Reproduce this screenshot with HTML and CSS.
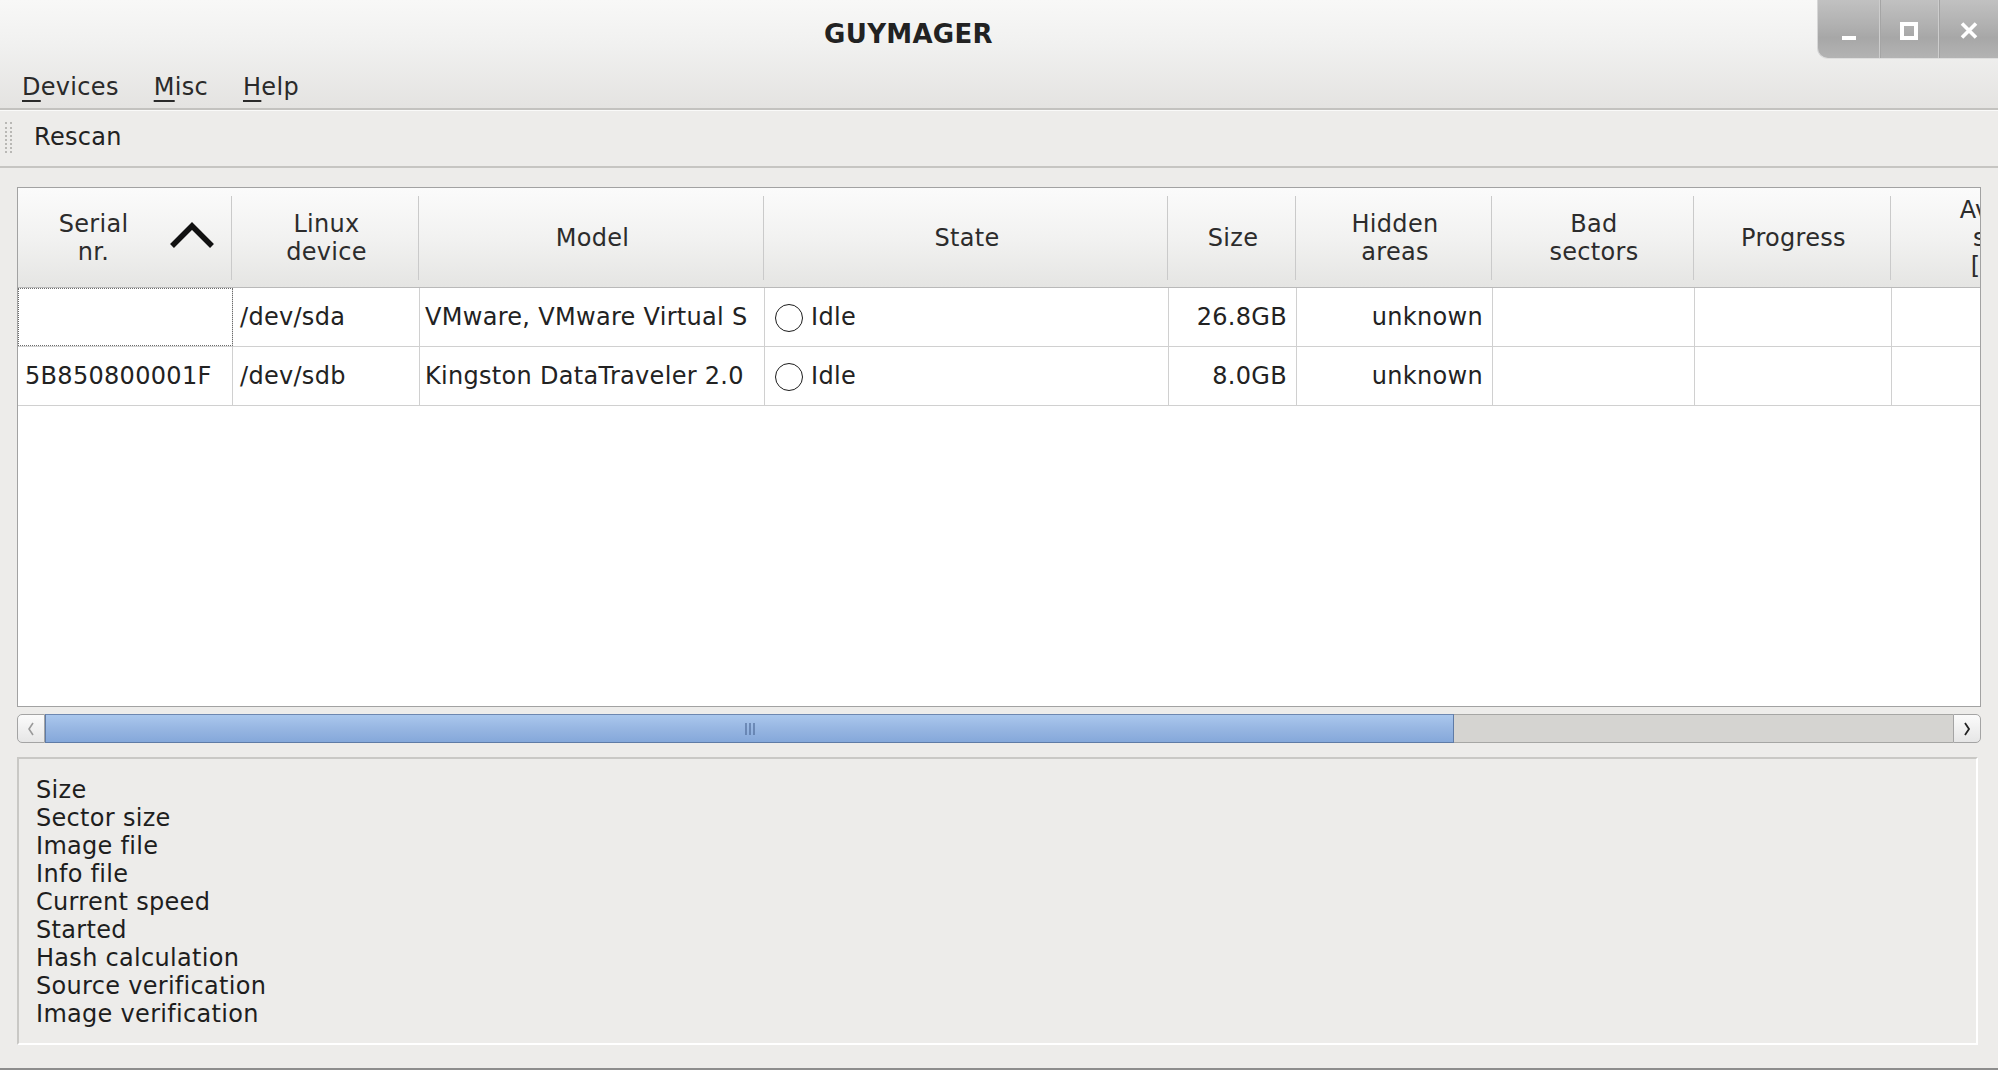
FILE: index.html
```html
<!DOCTYPE html>
<html>
<head>
<meta charset="utf-8">
<title>GUYMAGER</title>
<link rel="stylesheet" href="styles.css">
</head>
<body>
<div class="window">
  <div class="top">
    <div class="titlebar">
      <div class="title">GUYMAGER</div>
      <div class="wm">
        <div class="wm-btn wm-min"><svg width="14" height="4" viewBox="0 0 14 4"><rect x="0" y="0" width="14" height="4" fill="#fff"/></svg></div>
        <div class="wm-btn wm-max"><svg width="18" height="18" viewBox="0 0 18 18"><rect x="2" y="2" width="14" height="14" fill="none" stroke="#fff" stroke-width="4"/></svg></div>
        <div class="wm-btn wm-close"><svg width="18" height="17" viewBox="0 0 18 17"><path d="M2 1.5 L16 15.5 M16 1.5 L2 15.5" stroke="#fff" stroke-width="3.6" fill="none"/></svg></div>
      </div>
    </div>
    <div class="menubar">
      <span class="menu"><u>D</u>evices</span>
      <span class="menu"><u>M</u>isc</span>
      <span class="menu"><u>H</u>elp</span>
    </div>
  </div>

  <div class="toolbar">
    <span class="grip"></span>
    <span class="tool">Rescan</span>
  </div>

  <div class="table">
    <div class="thead cols">
      <div class="th th-sort">
        <span class="th-label">Serial<br>nr.</span>
        <svg class="sort-arrow" width="46" height="27" viewBox="0 0 46 27"><polyline points="3,24 23,4 43,24" fill="none" stroke="#111" stroke-width="5.5"/></svg>
      </div>
      <div class="th">Linux<br>device</div>
      <div class="th">Model</div>
      <div class="th">State</div>
      <div class="th">Size</div>
      <div class="th">Hidden<br>areas</div>
      <div class="th">Bad<br>sectors</div>
      <div class="th">Progress</div>
      <div class="th">Average<br>speed<br>[MB/s]</div>
    </div>
    <div class="row cols">
      <div class="td focus"></div>
      <div class="td">/dev/sda</div>
      <div class="td td-model">VMware, VMware Virtual S</div>
      <div class="td"><span class="led"></span>Idle</div>
      <div class="td num">26.8GB</div>
      <div class="td num">unknown</div>
      <div class="td"></div>
      <div class="td"></div>
      <div class="td"></div>
    </div>
    <div class="row cols">
      <div class="td">5B850800001F</div>
      <div class="td">/dev/sdb</div>
      <div class="td td-model">Kingston DataTraveler 2.0</div>
      <div class="td"><span class="led"></span>Idle</div>
      <div class="td num">8.0GB</div>
      <div class="td num">unknown</div>
      <div class="td"></div>
      <div class="td"></div>
      <div class="td"></div>
    </div>
  </div>

  <div class="hscroll">
    <div class="sb-btn sb-left"><svg width="8" height="14" viewBox="0 0 8 14"><path d="M6 1 L2 7 L6 13" fill="none" stroke="#9a9a9a" stroke-width="1.6"/></svg></div>
    <div class="sb-track">
      <div class="sb-handle"><svg width="10" height="12" viewBox="0 0 10 12"><path d="M1 0 V12 M5 0 V12 M9 0 V12" stroke="#4f6b98" stroke-width="1.2"/></svg></div>
      <div class="sb-rest"></div>
    </div>
    <div class="sb-btn sb-right"><svg width="8" height="14" viewBox="0 0 8 14"><path d="M2 1 L6 7 L2 13" fill="none" stroke="#222" stroke-width="1.8"/></svg></div>
  </div>

  <div class="info">
    <div>Size</div>
    <div>Sector size</div>
    <div>Image file</div>
    <div>Info file</div>
    <div>Current speed</div>
    <div>Started</div>
    <div>Hash calculation</div>
    <div>Source verification</div>
    <div>Image verification</div>
  </div>
</div>
</body>
</html>
```

FILE: styles.css
```css
* { box-sizing: border-box; }
html, body { margin: 0; padding: 0; }
body {
  width: 1998px;
  height: 1070px;
  overflow: hidden;
  background: #edecea;
  font-family: "DejaVu Sans", "Liberation Sans", sans-serif;
  font-size: 24px;
  letter-spacing: 0.3px;
  color: #1e1e1e;
}
.window {
  display: flex;
  flex-direction: column;
  height: 1070px;
  border-bottom: 2px solid #8d8d8d;
}

/* title + menu */
.top {
  height: 110px;
  flex: none;
  background: linear-gradient(#f8f8f7, #f1f1f0 40%, #e4e3e1);
  border-bottom: 2px solid #c3c2bf;
}
.titlebar {
  height: 58px;
  display: flex;
  align-items: flex-start;
}
.title {
  flex: 1;
  text-align: center;
  font-weight: bold;
  font-size: 26px;
  letter-spacing: 0.3px;
  line-height: 30px;
  padding-top: 19px;
  color: #222;
}
.wm {
  width: 181px;
  height: 59px;
  display: flex;
  background: linear-gradient(#c1c1c1, #b0b0b0 45%, #a7a7a7 65%, #b3b3b3);
  border-bottom-left-radius: 11px;
  border-left: 1px solid #d6d6d6;
  border-bottom: 1px solid #dedede;
  overflow: hidden;
}
.wm-btn {
  flex: 1;
  display: flex;
  justify-content: center;
  align-items: flex-start;
}
.wm-btn + .wm-btn { border-left: 1px solid #cdcdcd; box-shadow: inset 1px 0 0 #a5a5a5; }
.wm-min { padding-top: 36px; padding-left: 2px; }
.wm-max { padding-top: 22px; }
.wm-close { padding-top: 22px; }

.menubar {
  height: 50px;
  display: flex;
  align-items: flex-start;
  padding-left: 4px;
  padding-top: 15px;
  line-height: 28px;
  color: #2a2a2a;
}
.menu { padding: 0 17px 0 18px; }
.menu u {
  text-decoration: underline;
  text-decoration-thickness: 2px;
  text-underline-offset: 5px;
}

/* toolbar */
.toolbar {
  height: 58px;
  flex: none;
  display: flex;
  align-items: flex-start;
  border-top: 1px solid #fafaf9;
  border-bottom: 2px solid #c6c5c2;
  line-height: 28px;
}
.grip {
  margin: 11px 0 0 5px;
  width: 7px;
  height: 31px;
  border-left: 2px dotted #b9b8b5;
  border-right: 2px dotted #b9b8b5;
}
.tool { margin: 12px 0 0 22px; color: #222; }

/* table */
.table {
  flex: none;
  margin: 19px 17px 0 17px;
  height: 520px;
  background: #fff;
  border: 1px solid #a2a2a2;
  overflow: hidden;
}
.cols {
  display: grid;
  grid-template-columns: 215px 187px 345px 404px 128px 196px 202px 197px 236px;
  width: 2110px;
}
.thead {
  height: 100px;
  background: linear-gradient(#fbfbfb, #f2f2f1 50%, #e5e5e3);
  border-bottom: 1px solid #b9b9b9;
}
.th {
  position: relative;
  display: flex;
  align-items: center;
  justify-content: center;
  text-align: center;
  line-height: 28px;
  color: #2c2c2c;
}
.th::after {
  content: "";
  position: absolute;
  right: 1px;
  top: 8px;
  bottom: 7px;
  width: 1px;
  background: #cacaca;
}
.th-sort { justify-content: space-between; padding-right: 18px; }
.th-label { flex: 1; text-align: center; }
.sort-arrow { flex: none; margin-top: -4px; }

.row {
  height: 59px;
  border-bottom: 1px solid #d0d0d0;
}
.td {
  display: flex;
  align-items: center;
  padding: 0 6px 0 7px;
  white-space: nowrap;
  overflow: hidden;
  border-right: 1px solid #d0d0d0;
  color: #222;
}
.td-model { padding-left: 5px; }
.num { justify-content: flex-end; padding-right: 9px; }
.focus { outline: 1px dotted #6c6c6c; outline-offset: -1px; }
.led {
  width: 28px;
  height: 28px;
  border: 1.5px solid #1c1c1c;
  border-radius: 50%;
  margin: 2px 8px 0 3px;
  flex: none;
}

/* scrollbar */
.hscroll {
  flex: none;
  margin: 7px 17px 0 17px;
  height: 29px;
  display: flex;
}
.sb-btn {
  width: 28px;
  display: flex;
  align-items: center;
  justify-content: center;
  background: linear-gradient(#fbfbfb, #e6e6e6);
  border: 1px solid #a4a4a4;
}
.sb-left { border-radius: 5px 0 0 5px; }
.sb-right { border-radius: 0 5px 5px 0; }
.sb-track { flex: 1; display: flex; }
.sb-handle {
  width: 1409px;
  display: flex;
  align-items: center;
  justify-content: center;
  background: linear-gradient(#aac7ed, #97b6e2 50%, #85a8da);
  border: 1px solid #5f7ba6;
  border-top-color: #6d87b0;
}
.sb-rest {
  flex: 1;
  background: #d5d4d1;
  border-top: 1px solid #a6a6a4;
  border-bottom: 1px solid #a6a6a4;
}

/* info panel */
.info {
  flex: none;
  margin: 14px 20px 0 17px;
  height: 288px;
  padding: 17px 19px 0 17px;
  line-height: 28px;
  color: #1e1e1e;
  border-top: 2px solid #c9c8c5;
  border-left: 2px solid #c9c8c5;
  border-right: 2px solid #fff;
  border-bottom: 2px solid #fff;
}
```
